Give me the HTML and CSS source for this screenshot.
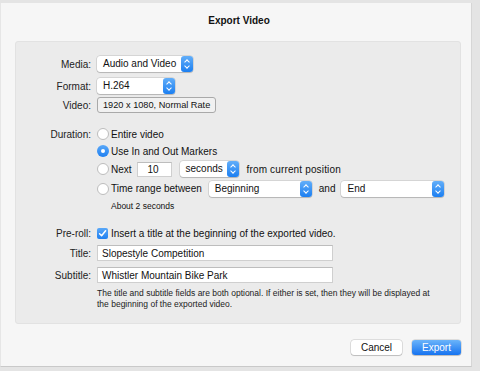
FILE: index.html
```html
<!DOCTYPE html>
<html lang="en">
<head>
    <meta charset="UTF-8">
    <title>Export Video</title>
    <link rel="stylesheet" href="styles.css">
</head>
<body>
    <div class="dialog">
        <div class="dialog-title">Export Video</div>

        <div class="panel">
            <div class="row row-media">
                <span class="label">Media:</span>
                <div class="popup w-media">Audio and Video<span class="stepper"></span></div>
            </div>
            <div class="row row-format">
                <span class="label">Format:</span>
                <div class="popup w-format">H.264<span class="stepper"></span></div>
            </div>
            <div class="row row-video">
                <span class="label">Video:</span>
                <div class="info-box">1920 x 1080, Normal Rate</div>
            </div>

            <div class="row row-duration">
                <span class="label">Duration:</span>
                <span class="radio"></span><span class="opt">Entire video</span>
            </div>
            <div class="row row-markers">
                <span class="label"></span>
                <span class="radio on"></span><span class="opt">Use In and Out Markers</span>
            </div>
            <div class="row row-next">
                <span class="label"></span>
                <span class="radio"></span><span class="opt">Next</span>
                <div class="field num">10</div>
                <div class="popup w-seconds">seconds<span class="stepper"></span></div>
                <span class="opt after">from current position</span>
            </div>
            <div class="row row-range">
                <span class="label"></span>
                <span class="radio"></span><span class="opt">Time range between</span>
                <div class="popup w-range">Beginning<span class="stepper"></span></div>
                <span class="opt and">and</span>
                <div class="popup w-range">End<span class="stepper"></span></div>
            </div>
            <div class="row row-about">
                <span class="label"></span>
                <span class="small">About 2 seconds</span>
            </div>

            <div class="row row-preroll">
                <span class="label">Pre-roll:</span>
                <span class="checkbox">
                    <svg width="11" height="11" viewBox="0 0 11 11"><path d="M2.6 5.8 L4.6 7.8 L8.6 2.8" fill="none" stroke="#fff" stroke-width="1.5" stroke-linecap="round" stroke-linejoin="round"/></svg>
                </span>
                <span class="opt">Insert a title at the beginning of the exported video.</span>
            </div>
            <div class="row row-title">
                <span class="label">Title:</span>
                <div class="field text">Slopestyle Competition</div>
            </div>
            <div class="row row-subtitle">
                <span class="label">Subtitle:</span>
                <div class="field text">Whistler Mountain Bike Park</div>
            </div>
            <div class="row row-note">
                <span class="label"></span>
                <p class="note">The title and subtitle fields are both optional. If either is set, then they will be displayed at the beginning of the exported video.</p>
            </div>
        </div>

        <div class="buttons">
            <div class="btn">Cancel</div>
            <div class="btn primary">Export</div>
        </div>
    </div>
</body>
</html>
```

FILE: styles.css
```css
body {
    margin: 0;
    background-color: #e4e4e4;
    font-family: "Liberation Sans", Arial, sans-serif;
    font-size: 10px;
    color: #111;
}
.dialog {
    margin-top: 3px;
    width: 472px;
    height: 364px;
    background-color: #f6f6f6;
    border-left: 1px solid #e6e6e6;
    border-right: 1px solid #d6d6d6;
    border-bottom: 1px solid #c9c9c9;
    box-sizing: border-box;
    padding-top: 11px;
}
.dialog-title {
    text-align: center;
    font-weight: bold;
    font-size: 10px;
    height: 14px;
    line-height: 14px;
    padding-left: 6px;
}
.panel {
    margin: 13px 0 0 14px;
    width: 446px;
    height: 283px;
    box-sizing: border-box;
    background-color: #ebebeb;
    border: 1px solid #e2e2e2;
    border-radius: 3px;
    padding-top: 14px;
}
.row {
    display: flex;
    align-items: center;
    height: 16px;
}
.label {
    width: 75px;
    margin-right: 6px;
    text-align: right;
    color: #222;
    flex-shrink: 0;
}
.row-format { margin-top: 6px; }
.row-video { margin-top: 3px; }
.row-duration { margin-top: 13px; }
.row-markers { margin-top: 1px; }
.row-next { margin-top: 2px; }
.row-range { margin-top: 3px; height: 17px; }
.row-about { margin-top: 3px; height: 12px; }
.row-preroll { margin-top: 13px; }
.row-title { margin-top: 4px; }
.row-subtitle { margin-top: 6px; }
.row-note { margin-top: 5px; height: auto; align-items: flex-start; }

/* popup buttons with the blue stepper on the right */
.popup {
    position: relative;
    height: 16px;
    line-height: 16px;
    box-sizing: border-box;
    padding-left: 6px;
    background-color: #fff;
    border-radius: 3px;
    box-shadow: 0 0 0 0.5px rgba(0,0,0,0.18), 0 1px 1px rgba(0,0,0,0.15);
    white-space: nowrap;
}
.stepper {
    position: absolute;
    right: 0;
    top: 0;
    width: 12px;
    height: 16px;
    border-radius: 3px;
    background: linear-gradient(#62aef9, #1c7ff1);
}
.stepper::before,
.stepper::after {
    content: "";
    position: absolute;
    left: 4px;
    width: 3px;
    height: 3px;
    border: solid #fff;
    border-width: 1.3px 0 0 1.3px;
}
.stepper::before {
    top: 4px;
    transform: rotate(45deg);
}
.stepper::after {
    top: 8px;
    transform: rotate(225deg);
}
.w-media { width: 96px; }
.w-format { width: 78px; }
.w-seconds { width: 59px; margin-left: 8px; }
.w-range { width: 103px; }

.info-box {
    height: 16px;
    line-height: 14px;
    box-sizing: border-box;
    padding: 0 5px 0 5px;
    border: 1px solid #a9a9a9;
    border-radius: 3px;
    background-color: #f1f1f1;
    font-size: 9.2px;
    white-space: nowrap;
}

.radio {
    width: 12px;
    height: 12px;
    box-sizing: border-box;
    border: 1px solid #bdbdbd;
    border-radius: 50%;
    background-color: #fff;
    margin-right: 2px;
    flex-shrink: 0;
    position: relative;
}
.radio.on {
    border: none;
    background: linear-gradient(#5aa8f8, #1f80f1);
}
.radio.on::after {
    content: "";
    position: absolute;
    left: 4px;
    top: 4px;
    width: 4px;
    height: 4px;
    border-radius: 50%;
    background-color: #fff;
}
.opt {
    white-space: nowrap;
}
.opt.after { margin-left: 8px; letter-spacing: 0.15px; }
.opt.and { margin: 0 6px 0 7px; }
.row-range .w-range:first-of-type { margin-left: 7px; }

.field {
    height: 16px;
    line-height: 16px;
    box-sizing: border-box;
    background-color: #fff;
    border: 1px solid #cfcfcf;
    border-top-color: #bdbdbd;
    white-space: nowrap;
}
.field.num {
    width: 35px;
    height: 15px;
    line-height: 13px;
    margin-left: 5px;
    padding-left: 10px;
}
.field.text {
    width: 236px;
    padding-left: 4px;
}

.checkbox {
    width: 11px;
    height: 11px;
    border-radius: 2px;
    background: linear-gradient(#5aa8f8, #1f80f1);
    margin-right: 3px;
    display: flex;
}

.small {
    font-size: 8.5px;
    padding-left: 14px;
}
.note {
    margin: 0;
    width: 340px;
    font-size: 8.5px;
    line-height: 11px;
    color: #222;
}

.buttons {
    display: flex;
    justify-content: flex-end;
    gap: 10px;
    margin: 16px 10px 0 0;
}
.btn {
    width: 51px;
    height: 15px;
    line-height: 15px;
    text-align: center;
    border-radius: 3px;
    background-color: #fff;
    box-shadow: 0 0 0 0.5px rgba(0,0,0,0.2), 0 1px 1px rgba(0,0,0,0.15);
}
.btn.primary {
    width: 49px;
    color: #fff;
    background: linear-gradient(#6bb4fa, #1673f0);
}
```
